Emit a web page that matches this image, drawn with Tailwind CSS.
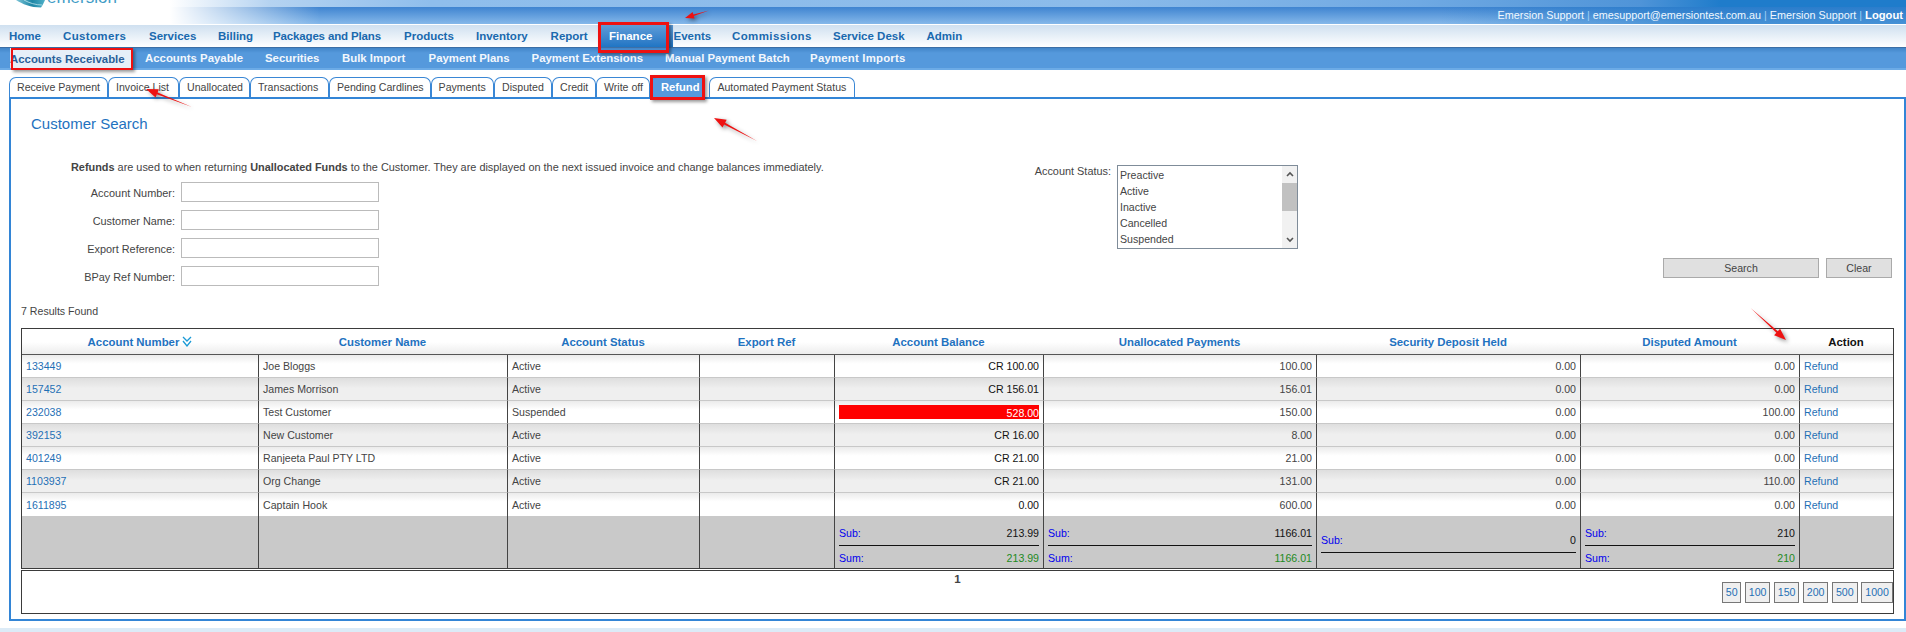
<!DOCTYPE html>
<html>
<head>
<meta charset="utf-8">
<script src="https://cdn.jsdelivr.net/npm/@tailwindcss/browser@4"></script>
</head>
<body class="bg-white">
<div class="relative w-full h-[632px] overflow-hidden bg-white font-['Liberation_Sans',Arial,sans-serif] text-[10.6px] text-[#444]">

  <!-- banner -->
  <header class="relative h-[24px] overflow-hidden">
    <div class="h-[7px] bg-[linear-gradient(90deg,#fff_170px,#b5d3f1_270px,#8fbeec_430px,#8bbbea_1100px,#6fa9e3_1420px,#4f94d8_1640px,#1f7ccb_1720px,#1f7ccb_100%)]"></div>
    <div class="flex h-[17px] items-center justify-end pr-[3px] text-[10.8px] text-[#f0f8ff] bg-[linear-gradient(90deg,#fff_170px,rgba(255,255,255,0)_320px,rgba(255,255,255,0)_100%),linear-gradient(90deg,rgba(30,120,200,0)_1440px,rgba(30,120,200,0.6)_1700px),linear-gradient(180deg,#3f84d0,#85b8ea)]">
      <span>Emersion Support <span class="text-[#9fd0f5]">|</span> emesupport@emersiontest.com.au <span class="text-[#9fd0f5]">|</span> Emersion Support <span class="text-[#9fd0f5]">|</span> <b class="text-white text-[11.2px]">Logout</b></span>
    </div>
    <svg class="absolute left-[14px] top-0 w-[34px] h-[8px]" viewBox="0 0 34 8">
      <defs><linearGradient id="sw" x1="0" x2="1" y1="0" y2="0"><stop offset="0" stop-color="#7fc6d8"/><stop offset=".55" stop-color="#1d86a6"/><stop offset="1" stop-color="#4fb0c8"/></linearGradient></defs>
      <path d="M2 0C8 4 17 7.5 27 7.5C29 5 30 2 31 0Z" fill="url(#sw)"/>
      <path d="M10 0C15 3 22 5 28 5" fill="none" stroke="#bfe6ee" stroke-width=".8"/>
    </svg>
    <span class="absolute left-[47px] top-[-12px] text-[17px] leading-[20px] text-[#3f9cc6]">emersion</span>
  </header>

  <!-- main nav -->
  <nav class="flex h-[23px] items-center pl-[9px] pt-[2px] border-t border-white text-[11.5px] font-bold text-[#1a69ae] bg-gradient-to-b from-[#cfe0f0] to-white">
    <a class="w-[54px] whitespace-nowrap">Home</a>
    <a class="w-[86px] whitespace-nowrap tracking-[0.35px]">Customers</a>
    <a class="w-[69px] whitespace-nowrap">Services</a>
    <a class="w-[55px] whitespace-nowrap">Billing</a>
    <a class="w-[131px] whitespace-nowrap tracking-[-0.15px]">Packages and Plans</a>
    <a class="w-[72px] whitespace-nowrap">Products</a>
    <a class="w-[74.6px] whitespace-nowrap">Inventory</a>
    <a class="w-[49.4px] whitespace-nowrap">Report</a>
    <a class="flex -mt-[2px] pt-[2px] self-stretch w-[73.5px] items-center pl-[9px] text-white whitespace-nowrap bg-gradient-to-b from-[#5d9cd8] to-[#1f75c4]">Finance</a>
    <a class="w-[58.5px] whitespace-nowrap">Events</a>
    <a class="w-[101px] whitespace-nowrap tracking-[0.4px]">Commissions</a>
    <a class="w-[93.5px] whitespace-nowrap">Service Desk</a>
    <a class="whitespace-nowrap">Admin</a>
  </nav>

  <!-- sub nav -->
  <nav class="flex h-[23px] items-center pl-[10px] border-t border-[#3c6fa6] border-b-2 border-b-[#6cabe6] text-[11.4px] font-bold text-[#f2f7fd] bg-[linear-gradient(180deg,#4285c8,#5599dc_5px,#5599dc)]">
    <a class="w-[135px] whitespace-nowrap"><span class="block h-[20px] w-[121px] bg-[#e6eff8] pt-[1px] leading-[20px] text-[#2a5f99]">Accounts Receivable</span></a>
    <a class="w-[120px] pt-[2px] whitespace-nowrap">Accounts Payable</a>
    <a class="w-[77px] pt-[2px] whitespace-nowrap">Securities</a>
    <a class="w-[86.6px] pt-[2px] whitespace-nowrap">Bulk Import</a>
    <a class="w-[103px] pt-[2px] whitespace-nowrap">Payment Plans</a>
    <a class="w-[133.5px] pt-[2px] whitespace-nowrap">Payment Extensions</a>
    <a class="w-[145px] pt-[2px] whitespace-nowrap">Manual Payment Batch</a>
    <a class="pt-[2px] whitespace-nowrap tracking-[0.2px]">Payment Imports</a>
  </nav>

  <!-- tabs -->
  <div class="mt-[7px] flex h-[20px] pl-[9px] leading-[18px] whitespace-nowrap">
    <a class="w-[99px] pl-[7px] rounded-t-[7px] border border-b-0 border-[#3a87d5]">Receive Payment</a>
    <a class="w-[71px] pl-[7px] rounded-t-[7px] border border-b-0 border-[#3a87d5]">Invoice List</a>
    <a class="w-[71px] pl-[7px] rounded-t-[7px] border border-b-0 border-[#3a87d5]">Unallocated</a>
    <a class="w-[79px] pl-[7px] rounded-t-[7px] border border-b-0 border-[#3a87d5]">Transactions</a>
    <a class="w-[101.6px] pl-[7px] rounded-t-[7px] border border-b-0 border-[#3a87d5]">Pending Cardlines</a>
    <a class="w-[63.4px] pl-[7px] rounded-t-[7px] border border-b-0 border-[#3a87d5]">Payments</a>
    <a class="w-[58px] pl-[7px] rounded-t-[7px] border border-b-0 border-[#3a87d5]">Disputed</a>
    <a class="w-[44px] pl-[7px] rounded-t-[7px] border border-b-0 border-[#3a87d5]">Credit</a>
    <a class="w-[54px] pl-[7px] rounded-t-[7px] border border-b-0 border-[#3a87d5]">Write off</a>
    <a class="w-[55px] pl-[10px] rounded-t-[7px] border border-b-0 border-[#3a87d5] bg-[#5599dc] text-[11.2px] font-bold text-white">Refund</a>
    <a class="ml-[4.4px] w-[145.6px] pl-[7px] rounded-t-[7px] border border-b-0 border-[#3a87d5]">Automated Payment Status</a>
  </div>

  <!-- content panel -->
  <main class="ml-[9px] border-2 border-[#3385d6] pb-[5px]">
    <h1 class="ml-[20px] mt-[16px] text-[15px] leading-[18px] font-normal text-[#1f72c0]">Customer Search</h1>

    <div class="mt-[27px] flex pr-[12px] text-[10.9px]">
      <div class="w-[1019px] pl-[60px]">
        <p class="h-[15px] leading-[15px] whitespace-nowrap"><b>Refunds</b> are used to when returning <b>Unallocated Funds</b> to the Customer. They are displayed on the next issued invoice and change balances immediately.</p>
        <div class="mt-[7px] grid grid-cols-[104px_198px] gap-x-[6px] gap-y-[8px] items-center">
          <label class="pt-[2px] text-right">Account Number:</label><input class="h-[20px] border border-[#bbb] bg-white">
          <label class="pt-[2px] text-right">Customer Name:</label><input class="h-[20px] border border-[#bbb] bg-white">
          <label class="pt-[2px] text-right">Export Reference:</label><input class="h-[20px] border border-[#bbb] bg-white">
          <label class="pt-[2px] text-right">BPay Ref Number:</label><input class="h-[20px] border border-[#bbb] bg-white">
        </div>
      </div>
      <div class="flex-1 pt-[3px]">
        <div class="flex gap-[6px]">
          <label class="w-[81px] pt-[1px] text-right leading-[15px]">Account Status:</label>
          <div class="mt-[2px] flex h-[84px] w-[181px] border border-[#7f8c99] bg-white text-[10.6px]">
            <ul class="flex-1 overflow-hidden pl-[2px] pt-[1px] leading-[16px]">
              <li>Preactive</li><li>Active</li><li>Inactive</li><li>Cancelled</li><li>Suspended</li>
            </ul>
            <div class="flex w-[15px] flex-col items-center justify-between bg-[#f1f1f1] py-[5px] relative">
              <svg class="w-[8px] h-[6px]" viewBox="0 0 8 6"><path d="M1 5L4 2L7 5" fill="none" stroke="#555" stroke-width="1.6"/></svg>
              <div class="absolute left-0 right-0 top-[17px] h-[28px] bg-[#c1c1c1]"></div>
              <svg class="w-[8px] h-[6px]" viewBox="0 0 8 6"><path d="M1 1L4 4L7 1" fill="none" stroke="#555" stroke-width="1.6"/></svg>
            </div>
          </div>
        </div>
        <div class="mt-[9px] flex justify-end gap-[7px] text-[10.6px]">
          <button class="h-[20px] w-[156px] border border-[#aaa] bg-[#e0e0e0] pt-[2px] text-[#444]">Search</button>
          <button class="h-[20px] w-[66px] border border-[#aaa] bg-[#e0e0e0] pt-[2px] text-[#444]">Clear</button>
        </div>
      </div>
    </div>

    <div class="px-[10px]">
      <p class="mt-[18px] leading-[15px]">7 Results Found</p>

      <div class="mt-[9px] border border-[#3b3b3b]">
        <table class="w-full table-fixed border-separate border-spacing-0">
          <colgroup>
            <col class="w-[236px]"><col class="w-[249px]"><col class="w-[192px]"><col class="w-[135px]"><col class="w-[209px]"><col class="w-[273px]"><col class="w-[264px]"><col class="w-[219px]"><col class="w-[94px]">
          </colgroup>
          <thead>
            <tr class="h-[26px] text-[11.4px] font-bold text-[#1f72c0] bg-[linear-gradient(180deg,#fff_50%,#ebebeb)] [&>th]:pt-[2px]">
              <th class="border-b border-[#555] font-bold"><span class="inline-flex items-center gap-[3px]">Account Number <svg class="w-[10px] h-[11px] -mt-[2px]" viewBox="0 0 10 11"><path d="M1 1L5 5L9 1M1 5L5 10L9 5" fill="none" stroke="#1a9ad6" stroke-width="1.3"/></svg></span></th>
              <th class="border-b border-[#555] font-bold">Customer Name</th>
              <th class="border-b border-[#555] font-bold">Account Status</th>
              <th class="border-b border-[#555] font-bold">Export Ref</th>
              <th class="border-b border-[#555] font-bold">Account Balance</th>
              <th class="border-b border-[#555] font-bold">Unallocated Payments</th>
              <th class="border-b border-[#555] font-bold">Security Deposit Held</th>
              <th class="border-b border-[#555] font-bold">Disputed Amount</th>
              <th class="border-b border-[#555] font-bold text-[#111]">Action</th>
            </tr>
          </thead>
          <tbody>
            <tr class="h-[23px] bg-[linear-gradient(180deg,#ebebeb,#fff_38%)] [&>td]:pt-[2px]">
              <td class="border-b border-[#c8c8c8] pl-[4px] text-[#1f6fb5]">133449</td><td class="border-l border-b border-l-[#444] border-b-[#c8c8c8] pl-[4px]">Joe Bloggs</td><td class="border-l border-b border-l-[#444] border-b-[#c8c8c8] pl-[4px]">Active</td><td class="border-l border-b border-l-[#444] border-b-[#c8c8c8]"></td>
              <td class="border-l border-b border-l-[#444] border-b-[#c8c8c8] pr-[4px] text-right text-[#111]">CR 100.00</td><td class="border-l border-b border-l-[#444] border-b-[#c8c8c8] pr-[4px] text-right">100.00</td><td class="border-l border-b border-l-[#444] border-b-[#c8c8c8] pr-[4px] text-right">0.00</td><td class="border-l border-b border-l-[#444] border-b-[#c8c8c8] pr-[4px] text-right">0.00</td><td class="border-l border-b border-l-[#444] border-b-[#c8c8c8] pl-[4px] text-[#1f6fb5]">Refund</td>
            </tr>
            <tr class="h-[23px] bg-[linear-gradient(180deg,#dedede,#efefef_45%)] [&>td]:pt-[2px]">
              <td class="border-b border-[#c8c8c8] pl-[4px] text-[#1f6fb5]">157452</td><td class="border-l border-b border-l-[#444] border-b-[#c8c8c8] pl-[4px]">James Morrison</td><td class="border-l border-b border-l-[#444] border-b-[#c8c8c8] pl-[4px]">Active</td><td class="border-l border-b border-l-[#444] border-b-[#c8c8c8]"></td>
              <td class="border-l border-b border-l-[#444] border-b-[#c8c8c8] pr-[4px] text-right text-[#111]">CR 156.01</td><td class="border-l border-b border-l-[#444] border-b-[#c8c8c8] pr-[4px] text-right">156.01</td><td class="border-l border-b border-l-[#444] border-b-[#c8c8c8] pr-[4px] text-right">0.00</td><td class="border-l border-b border-l-[#444] border-b-[#c8c8c8] pr-[4px] text-right">0.00</td><td class="border-l border-b border-l-[#444] border-b-[#c8c8c8] pl-[4px] text-[#1f6fb5]">Refund</td>
            </tr>
            <tr class="h-[23px] bg-[linear-gradient(180deg,#ebebeb,#fff_38%)] [&>td]:pt-[2px]">
              <td class="border-b border-[#c8c8c8] pl-[4px] text-[#1f6fb5]">232038</td><td class="border-l border-b border-l-[#444] border-b-[#c8c8c8] pl-[4px]">Test Customer</td><td class="border-l border-b border-l-[#444] border-b-[#c8c8c8] pl-[4px]">Suspended</td><td class="border-l border-b border-l-[#444] border-b-[#c8c8c8]"></td>
              <td class="border-l border-b border-l-[#444] border-b-[#c8c8c8] px-[4px] text-right text-white"><div class="-mt-[2px] h-[14px] bg-[#ff0000] pt-[1px] leading-[14px]">528.00</div></td><td class="border-l border-b border-l-[#444] border-b-[#c8c8c8] pr-[4px] text-right">150.00</td><td class="border-l border-b border-l-[#444] border-b-[#c8c8c8] pr-[4px] text-right">0.00</td><td class="border-l border-b border-l-[#444] border-b-[#c8c8c8] pr-[4px] text-right">100.00</td><td class="border-l border-b border-l-[#444] border-b-[#c8c8c8] pl-[4px] text-[#1f6fb5]">Refund</td>
            </tr>
            <tr class="h-[23px] bg-[linear-gradient(180deg,#dedede,#efefef_45%)] [&>td]:pt-[2px]">
              <td class="border-b border-[#c8c8c8] pl-[4px] text-[#1f6fb5]">392153</td><td class="border-l border-b border-l-[#444] border-b-[#c8c8c8] pl-[4px]">New Customer</td><td class="border-l border-b border-l-[#444] border-b-[#c8c8c8] pl-[4px]">Active</td><td class="border-l border-b border-l-[#444] border-b-[#c8c8c8]"></td>
              <td class="border-l border-b border-l-[#444] border-b-[#c8c8c8] pr-[4px] text-right text-[#111]">CR 16.00</td><td class="border-l border-b border-l-[#444] border-b-[#c8c8c8] pr-[4px] text-right">8.00</td><td class="border-l border-b border-l-[#444] border-b-[#c8c8c8] pr-[4px] text-right">0.00</td><td class="border-l border-b border-l-[#444] border-b-[#c8c8c8] pr-[4px] text-right">0.00</td><td class="border-l border-b border-l-[#444] border-b-[#c8c8c8] pl-[4px] text-[#1f6fb5]">Refund</td>
            </tr>
            <tr class="h-[23px] bg-[linear-gradient(180deg,#ebebeb,#fff_38%)] [&>td]:pt-[2px]">
              <td class="border-b border-[#c8c8c8] pl-[4px] text-[#1f6fb5]">401249</td><td class="border-l border-b border-l-[#444] border-b-[#c8c8c8] pl-[4px]">Ranjeeta Paul PTY LTD</td><td class="border-l border-b border-l-[#444] border-b-[#c8c8c8] pl-[4px]">Active</td><td class="border-l border-b border-l-[#444] border-b-[#c8c8c8]"></td>
              <td class="border-l border-b border-l-[#444] border-b-[#c8c8c8] pr-[4px] text-right text-[#111]">CR 21.00</td><td class="border-l border-b border-l-[#444] border-b-[#c8c8c8] pr-[4px] text-right">21.00</td><td class="border-l border-b border-l-[#444] border-b-[#c8c8c8] pr-[4px] text-right">0.00</td><td class="border-l border-b border-l-[#444] border-b-[#c8c8c8] pr-[4px] text-right">0.00</td><td class="border-l border-b border-l-[#444] border-b-[#c8c8c8] pl-[4px] text-[#1f6fb5]">Refund</td>
            </tr>
            <tr class="h-[23px] bg-[linear-gradient(180deg,#dedede,#efefef_45%)] [&>td]:pt-[2px]">
              <td class="border-b border-[#c8c8c8] pl-[4px] text-[#1f6fb5]">1103937</td><td class="border-l border-b border-l-[#444] border-b-[#c8c8c8] pl-[4px]">Org Change</td><td class="border-l border-b border-l-[#444] border-b-[#c8c8c8] pl-[4px]">Active</td><td class="border-l border-b border-l-[#444] border-b-[#c8c8c8]"></td>
              <td class="border-l border-b border-l-[#444] border-b-[#c8c8c8] pr-[4px] text-right text-[#111]">CR 21.00</td><td class="border-l border-b border-l-[#444] border-b-[#c8c8c8] pr-[4px] text-right">131.00</td><td class="border-l border-b border-l-[#444] border-b-[#c8c8c8] pr-[4px] text-right">0.00</td><td class="border-l border-b border-l-[#444] border-b-[#c8c8c8] pr-[4px] text-right">110.00</td><td class="border-l border-b border-l-[#444] border-b-[#c8c8c8] pl-[4px] text-[#1f6fb5]">Refund</td>
            </tr>
            <tr class="h-[23px] bg-[linear-gradient(180deg,#ebebeb,#fff_38%)] [&>td]:pt-[2px]">
              <td class="pl-[4px] text-[#1f6fb5]">1611895</td><td class="border-l border-l-[#444] pl-[4px]">Captain Hook</td><td class="border-l border-l-[#444] pl-[4px]">Active</td><td class="border-l border-l-[#444]"></td>
              <td class="border-l border-l-[#444] pr-[4px] text-right text-[#111]">0.00</td><td class="border-l border-l-[#444] pr-[4px] text-right">600.00</td><td class="border-l border-l-[#444] pr-[4px] text-right">0.00</td><td class="border-l border-l-[#444] pr-[4px] text-right">0.00</td><td class="border-l border-l-[#444] pl-[4px] text-[#1f6fb5]">Refund</td>
            </tr>
            <tr class="h-[52px] bg-[#c9c9c9] align-top">
              <td></td><td class="border-l border-l-[#444]"></td><td class="border-l border-l-[#444]"></td><td class="border-l border-l-[#444]"></td>
              <td class="border-l border-l-[#444] px-[4px] pt-[10px]">
                <div class="flex h-[15px] justify-between leading-[15px] text-[#111]"><span class="text-[#0000ee]">Sub:</span><span>213.99</span></div>
                <div class="mt-[4px] border-t border-[#111]"></div>
                <div class="mt-[5px] flex h-[15px] justify-between leading-[15px] text-[#1d8a1d]"><span class="text-[#0000ee]">Sum:</span><span>213.99</span></div>
              </td>
              <td class="border-l border-l-[#444] px-[4px] pt-[10px]">
                <div class="flex h-[15px] justify-between leading-[15px] text-[#111]"><span class="text-[#0000ee]">Sub:</span><span>1166.01</span></div>
                <div class="mt-[4px] border-t border-[#111]"></div>
                <div class="mt-[5px] flex h-[15px] justify-between leading-[15px] text-[#1d8a1d]"><span class="text-[#0000ee]">Sum:</span><span>1166.01</span></div>
              </td>
              <td class="border-l border-l-[#444] px-[4px] pt-[17px]">
                <div class="flex h-[15px] justify-between leading-[15px] text-[#111]"><span class="text-[#0000ee]">Sub:</span><span>0</span></div>
                <div class="mt-[4px] border-t border-[#111]"></div>
              </td>
              <td class="border-l border-l-[#444] px-[4px] pt-[10px]">
                <div class="flex h-[15px] justify-between leading-[15px] text-[#111]"><span class="text-[#0000ee]">Sub:</span><span>210</span></div>
                <div class="mt-[4px] border-t border-[#111]"></div>
                <div class="mt-[5px] flex h-[15px] justify-between leading-[15px] text-[#1d8a1d]"><span class="text-[#0000ee]">Sum:</span><span>210</span></div>
              </td>
              <td class="border-l border-l-[#444]"></td>
            </tr>
          </tbody>
        </table>
      </div>

      <div class="mt-[1px] grid h-[44px] grid-cols-[1fr_auto_1fr] border border-[#3b3b3b]">
        <span></span>
        <b class="pt-[2px] text-[11.5px] leading-[12px]">1</b>
        <div class="mt-[11px] flex h-[21px] justify-end gap-[3.4px] text-[#1f6fb5]">
          <a class="flex w-[19.6px] items-center justify-center border border-[#777] bg-[#efefef]">50</a>
          <a class="flex w-[25.6px] items-center justify-center border border-[#777] bg-[#efefef]">100</a>
          <a class="flex w-[25.6px] items-center justify-center border border-[#777] bg-[#efefef]">150</a>
          <a class="flex w-[25.6px] items-center justify-center border border-[#777] bg-[#efefef]">200</a>
          <a class="flex w-[26px] items-center justify-center border border-[#777] bg-[#efefef]">500</a>
          <a class="flex w-[31.8px] items-center justify-center border border-[#777] bg-[#efefef]">1000</a>
        </div>
      </div>
    </div>
  </main>

  <div class="mt-[7px] h-[10px] bg-[#dcebf7]"></div>

  <!-- red annotations painted on top of the page -->
  <div class="absolute left-[598px] top-[22px] h-[31px] w-[71px] border-[3px] border-[#ee1111] shadow-[2px_2px_3px_rgba(0,0,0,0.4)]"></div>
  <div class="absolute left-[11px] top-[48px] h-[22px] w-[122px] border-[2px] border-[#ee1111] shadow-[2px_2px_3px_rgba(0,0,0,0.4)]"></div>
  <div class="absolute left-[650px] top-[75px] h-[25px] w-[55px] border-[3px] border-[#ee1111] shadow-[2px_2px_3px_rgba(0,0,0,0.4)]"></div>
  <svg class="absolute left-0 top-0 h-[632px] w-[1906px] drop-shadow-[2px_2px_2px_rgba(0,0,0,0.45)]" viewBox="0 0 1906 632">
    <polygon fill="#ee1111" points="709,10.5 693.8,16.1 694.6,18.6 685,18 692.6,12 693.4,14.5"/>
    <polygon fill="#ee1111" points="192,107 157.6,92.5 158.8,89.2 146,89 155.6,97.6 156.8,94.3"/>
    <polygon fill="#ee1111" points="757,141 725.1,122.8 726.7,119.7 714,118 722.5,127.6 724.1,124.5"/>
    <polygon fill="#ee1111" points="1750.6,308 1777.8,331.3 1780.1,328.7 1786,340 1774.1,335.3 1776.4,332.7"/>
  </svg>
</div>
</body>
</html>
